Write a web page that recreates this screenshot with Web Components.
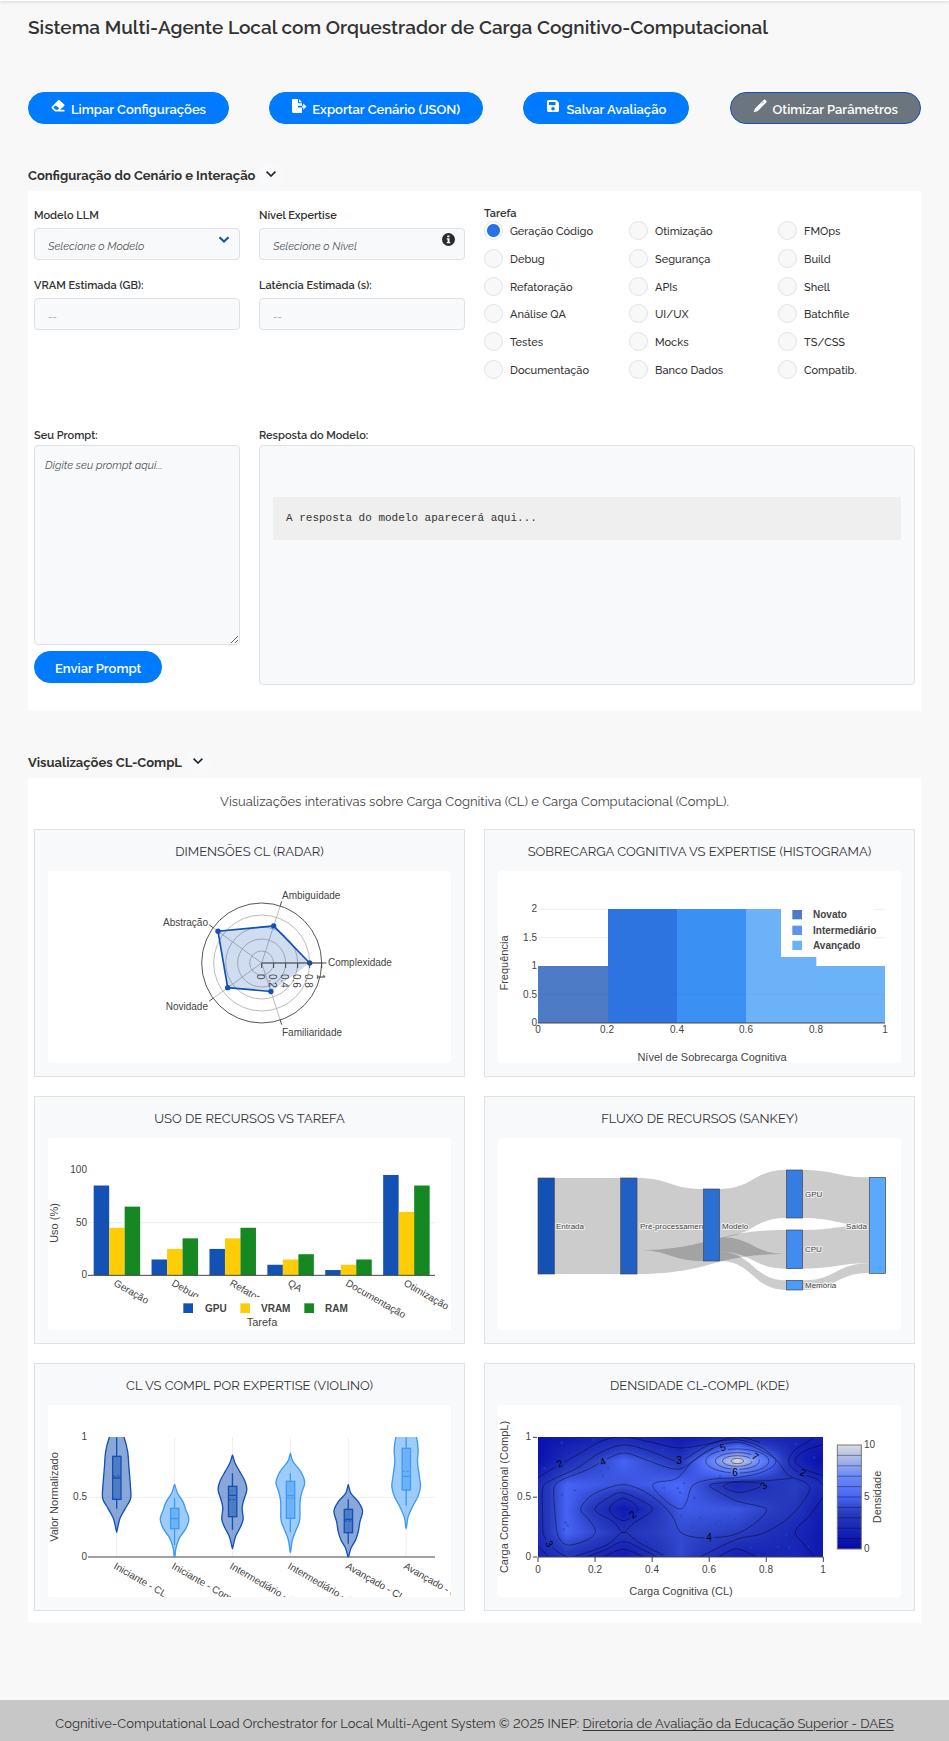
<!DOCTYPE html>
<html lang="pt-BR">
<head>
<meta charset="utf-8">
<meta name="viewport" content="width=device-width, initial-scale=1">
<title>Sistema Multi-Agente Local</title>
<style>
body{margin:0;background:#f8f8f8;color:#333;font-family:Raleway,"Open Sans",sans-serif;font-size:13px;font-variant-numeric:lining-nums}
</style>
</head>
<body>
<orq-app></orq-app>
<script>
const define = (name, html, setup) => {
  const tpl = document.createElement('template');
  tpl.innerHTML = html;
  customElements.define(name, class extends HTMLElement {
    connectedCallback() {
      if (this.shadowRoot) return;
      this.attachShadow({ mode: 'open' }).append(tpl.content.cloneNode(true));
      if (setup) setup(this, this.shadowRoot);
    }
  });
};

/* ---------- buttons ---------- */
const ICONS = {
  eraser: '<path fill-rule="evenodd" d="M8.6 1.2 13.2 5.4c.5.5.5 1.100 0 1.600L9 10.800h4.500V12.500H4.200L.900 9.400c-.5-.5-.5-1.200 0-1.700L7.100 1.200c.4-.4 1.100-.4 1.500 0zM4.600 6.400 2.300 8.500l2.500 2.300h1.900l1.600-1.500z"/>',
  export: '<path fill-rule="evenodd" d="M1.200 0H6v4.200h4v2.600H6v1.600h4V14H1.200C.5 14 0 13.500 0 12.800V1.200C0 .5.5 0 1.200 0zM7 0l3 3.200H7zM11.200 4.500 14.500 7.600 11.200 10.700V8.400H10V6.800h1.200z"/>',
  save: '<path fill-rule="evenodd" d="M2.500 1h7.800L13 3.700v7.800c0 .8-.7 1.500-1.500 1.500h-9C1.700 13 1 12.300 1 11.500v-9C1 1.700 1.700 1 2.500 1zM3 3v3h6.500V3zm4 5a1.800 1.800 0 1 0 0 3.600A1.800 1.800 0 0 0 7 8z"/>',
  pen: '<path d="M10.700.9c.5-.5 1.200-.5 1.700 0l.9.9c.5.5.5 1.200 0 1.700L4.800 12 1 13.300l-.3-.3L2 9.400z"/><path d="M9 4.500l1.800-1.800" stroke="#6c757d" stroke-width=".8"/>'
};
define('pill-button', `
<style>
:host{display:block}
button{display:flex;align-items:center;gap:6px;height:32px;padding:0 22px;border:1px solid #007bff;border-radius:16px;background:#007bff;color:#fff;font:600 13px/18px Raleway,"Open Sans",sans-serif;white-space:nowrap;cursor:pointer}
:host([tone=muted]) button{background:#6c757d;border-color:#1351b4}
:host([plain]) button{padding:0 20px}
svg{width:14px;height:14px;margin-bottom:4px;fill:#fff;overflow:visible}
:host([plain]) svg{display:none}
span{padding-top:3px}
</style>
<button type="button"><svg viewBox="0 0 14 14" aria-hidden="true"></svg><span><slot></slot></span></button>`,
(el, root) => { root.querySelector('svg').innerHTML = ICONS[el.getAttribute('icon')] || ''; });

/* ---------- titled section with a panel ---------- */
define('panel-section', `
<style>
:host{display:block;margin-top:37px}
header{display:flex;align-items:center;gap:3px;height:30px}
h2{margin:0;font-size:13px;line-height:18px;font-weight:700}
button{width:26px;height:26px;padding:0 0 5px;border:0;border-radius:50%;background:#f8f9fb;display:grid;place-items:center;cursor:pointer}
.panel{background:#fff;padding:0 6px}
</style>
<header><h2></h2><button type="button" aria-label="Recolher"><svg width="10" height="6" viewBox="0 0 10 6" fill="none" stroke="#222" stroke-width="1.600"><path d="M.6.6 5 5 9.400.6"/></svg></button></header>
<div class="panel"><slot></slot></div>`,
(el, root) => { root.querySelector('h2').textContent = el.getAttribute('heading'); });

/* ---------- form fields ---------- */
define('form-field', `
<style>
:host{display:block}
label{display:block;font-size:11px;line-height:20px;font-weight:600;margin-bottom:2px}
.box{position:relative}
select,input{box-sizing:border-box;display:block;width:100%;height:32px;border:1px solid #dee2e6;border-radius:4px;background:#f8f9fb;padding:6px 13px 0;color:#555;font:italic 11px/18px Raleway,"Open Sans",sans-serif;appearance:none}
input::placeholder{color:#777;opacity:1}
svg{position:absolute;right:10px;top:8px;pointer-events:none}
</style>
<label for="f"></label><div class="box"></div>`,
(el, root) => {
  root.querySelector('label').textContent = el.getAttribute('label');
  const opt = el.getAttribute('option');
  const mark = {
    chevron: '<svg width="12" height="8" viewBox="0 0 12 8" fill="none" stroke="#1351b4" stroke-width="2"><path d="M1.500 1.200 6 5.500 10.500 1.200"/></svg>',
    info: '<svg style="top:5px" width="13" height="13" viewBox="0 0 13 13"><circle cx="6.500" cy="6.500" r="6.500" fill="#2b2b2b"/><path d="M5.300 2.500h2.200v1.700H5.300zM4.800 5.300h2.700v3.700h.8v1.200H4.800V9h.8V6.500h-.8z" fill="#fff"/></svg>'
  }[el.getAttribute('mark')] || '';
  root.querySelector('.box').innerHTML = (opt ? `<select id="f"><option>${opt}</option></select>` : '<input id="f" type="text" readonly placeholder="--">') + mark;
});

/* ---------- task radios ---------- */
const TASKS = ['Geração Código','Otimização','FMOps','Debug','Segurança','Build','Refatoração','APIs','Shell','Análise QA','UI/UX','Batchfile','Testes','Mocks','TS/CSS','Documentação','Banco Dados','Compatib.'];
define('task-picker', `
<style>
:host{display:block}
fieldset{border:0;margin:0;padding:0;min-width:0}
legend{padding:1px 0 0;font-size:11px;line-height:14px;font-weight:600}
.grid{display:grid;grid-template-columns:145fr 149fr 137fr;grid-auto-rows:19px;align-content:space-between;height:158px}
label{display:flex;align-items:center;gap:7px;font-size:11px;line-height:17px;font-weight:500}
span{padding-top:2px}
input{appearance:none;box-sizing:border-box;width:19px;height:19px;margin:0;border:1px solid #e2e3e6;border-radius:50%;background:#f8f8f8}
input:checked{background:radial-gradient(circle,#2670e8 0 6px,#fff 7px)}
</style>
<fieldset><legend>Tarefa</legend><div class="grid"></div></fieldset>`,
(el, root) => {
  root.querySelector('.grid').innerHTML = TASKS.map((t, i) => `<label><input type="radio" name="task"${i ? '' : ' checked'}><span>${t}</span></label>`).join('');
});

/* ---------- scenario form ---------- */
define('scenario-form', `
<style>
:host{display:grid;grid-template-columns:repeat(4,minmax(0,1fr));column-gap:19px;padding:15px 0 26px}
.fields{display:flex;flex-direction:column;gap:16px}
task-picker,.answer{grid-column:span 2}
.prompt,.answer{margin-top:47px}
.answer{grid-column:span 3}
label,h3{display:block;margin:0;padding-top:1px;font-size:11px;line-height:18px;font-weight:600}
textarea{box-sizing:border-box;display:block;width:100%;height:200px;border:1px solid #dee2e6;border-radius:4px;background:#f8f9fb;padding:11px 10px;resize:both;font:italic 11px/18px Raleway,"Open Sans",sans-serif}
textarea::placeholder{color:#555;opacity:1}
pill-button{display:inline-block;margin-top:6px}
.out{box-sizing:border-box;height:240px;border:1px solid #dee2e6;border-radius:4px;background:#f8f9fb;padding:51px 13px 0}
pre{margin:0;padding:12px 13px 13px;background:#efefef;font:11px/18px "Liberation Mono",monospace;white-space:pre-wrap}
</style>
<div class="fields"><form-field label="Modelo LLM" option="Selecione o Modelo" mark="chevron"></form-field><form-field label="VRAM Estimada (GB):"></form-field></div>
<div class="fields"><form-field label="Nível Expertise" option="Selecione o Nível" mark="info"></form-field><form-field label="Latência Estimada (s):"></form-field></div>
<task-picker></task-picker>
<div class="prompt"><label for="p">Seu Prompt:</label><textarea id="p" placeholder="Digite seu prompt aqui..."></textarea><pill-button plain>Enviar Prompt</pill-button></div>
<div class="answer"><h3>Resposta do Modelo:</h3><div class="out"><pre>A resposta do modelo aparecerá aqui...</pre></div></div>`);

/* ---------- charts ---------- */
/* Shapes are drawn on a fine grid of three units per chart pixel, starting at (54, top). */
const plot = top => ({
  shapes: s => `<g transform="scale(.33333) translate(-54 ${-top})">${s}</g>`,
  text: (x, y, s, { anchor = 'middle', size = 10, bold, rot, raw, fill = '#444', halo } = {}) => {
    const px = Math.round((x - 54) / 3), py = Math.round((y - top) / 3);
    const base = raw ? 0 : size === 10 ? 3 : Math.round(size * .35);
    return `<text transform="translate(${px} ${py})${rot ? ` rotate(${rot})` : ''}" y="${base}" text-anchor="${anchor}" font-size="${size}"${bold ? ' font-weight="700"' : ''} fill="${fill}"${halo ? ' stroke="#fff" stroke-width="2" stroke-opacity=".7" paint-order="stroke"' : ''}>${s}</text>`;
  }
});
const rect = (x1, y1, x2, y2, fill, extra = '') => `<rect x="${x1}" y="${y1}" width="${x2 - x1}" height="${y2 - y1}" fill="${fill}" ${extra}/>`;
const line = (x1, y1, x2, y2, stroke = '#444', w = 3) => `<path d="M${x1} ${y1}L${x2} ${y2}" stroke="${stroke}" stroke-width="${w}" fill="none"/>`;
const smooth = (pts, closed) => {
  const n = pts.length, at = i => closed ? pts[(i + n) % n] : pts[Math.max(0, Math.min(n - 1, i))];
  let d = `M${pts[0]}`;
  for (let i = 0; i < (closed ? n : n - 1); i++) {
    const [a, b, c, e] = [at(i - 1), at(i), at(i + 1), at(i + 2)];
    d += `C${b[0] + (c[0] - a[0]) / 6} ${b[1] + (c[1] - a[1]) / 6} ${c[0] - (e[0] - b[0]) / 6} ${c[1] - (e[1] - b[1]) / 6} ${c[0]} ${c[1]}`;
  }
  return d + (closed ? 'Z' : '');
};

const CHARTS = {
  radar() {
    const p = plot(153), cx = 695, cy = 429, R = 180;
    const pt = (k, r) => { const a = k * 72 * Math.PI / 180; return [cx + R * r * Math.cos(a), cy - R * r * Math.sin(a)]; };
    let grid = '';
    for (const r of [.2, .4, .6, .8]) grid += `<circle cx="${cx}" cy="${cy}" r="${R * r}" fill="none" stroke="#bbb" stroke-width="3"/>`;
    for (let k = 0; k < 5; k++) grid += line(cx, cy, ...pt(k, 1), '#bbb') + line(...pt(k, 1), ...pt(k, 1.08), '#444', 3);
    const v = [.8, .65, .9, .7, .5].map((r, k) => pt(k, r));
    const area = `<path d="M${v.join('L')}Z" fill="#1351b4" fill-opacity=".2"/><path d="M${v.join('L')}" fill="none" stroke="#1351b4" stroke-width="5"/>` + v.map(q => `<circle cx="${q[0]}" cy="${q[1]}" r="8" fill="#1351b4"/>`).join('');
    let s = p.shapes(grid + `<circle cx="${cx}" cy="${cy}" r="${R}" fill="none" stroke="#555" stroke-width="3"/>` + area + line(cx, cy, cx + R, cy, '#444', 3) + [0, .2, .4, .6, .8, 1].map(r => line(cx + R * r, cy, cx + R * r, cy + 15)).join(''));
    [0, .2, .4, .6, .8, 1].forEach(r => { s += p.text(cx + R * r - 5, 462, r, { anchor: 'start', rot: 90 }); });
    return s + p.text(895, 429, 'Complexidade', { anchor: 'start' }) + p.text(756, 228, 'Ambiguidade', { anchor: 'start' }) + p.text(533, 309, 'Abstração', { anchor: 'end' }) + p.text(533, 561, 'Novidade', { anchor: 'end' }) + p.text(757, 639, 'Familiaridade', { anchor: 'start' });
  },
  histogram() {
    const p = plot(153);
    let s = [268, 353].map(y => line(174, y, 1215, y, '#eee')).join('');
    s += rect(174, 438, 384, 609, '#4d7bc6') + rect(384, 267, 591, 609, '#2e74e0') + rect(591, 267, 798, 609, '#3a91f3') + rect(798, 267, 1009, 609, '#6cb2f9') + rect(1008, 438, 1215, 609, '#6cb2f9');
    s += line(174, 523, 1215, 523, '#00000008') + line(174, 609, 1215, 609) + rect(903, 258, 1182, 411, '#fff');
    const keys = [['Novato', '#4d7bc6', 284], ['Intermediário', '#5c94ee', 331], ['Avançado', '#6cb2f9', 376]];
    s += keys.map(k => rect(937, k[2] - 14, 966, k[2] + 14, k[1])).join('');
    let o = p.shapes(s) + keys.map(k => p.text(999, k[2] + 2, k[0], { anchor: 'start', bold: 1 })).join('');
    ['2', '1.5', '1', '0.5', '0'].forEach((t, i) => { o += p.text(171, 267 + i * 85.5, t, { anchor: 'end' }); });
    ['0', '0.2', '0.4', '0.6', '0.8', '1'].forEach((t, i) => { o += p.text(174 + i * 208.2, 630, t); });
    return o + p.text(695, 711, 'Nível de Sobrecarga Cognitiva', { size: 11 }) + p.text(72, 428, 'Frequência', { size: 11, rot: -90 });
  },
  bars() {
    const p = plot(144), names = ['Geração', 'Debug', 'Refatoração', 'QA', 'Documentação', 'Otimização'], col = ['#1351b4', '#ffcd07', '#168821'];
    const data = [[85, 45, 65], [15, 25, 35], [25, 35, 45], [10, 15, 20], [5, 10, 15], [95, 60, 85]];
    let s = line(174, 398, 1215, 398, '#eee');
    data.forEach((g, i) => g.forEach((v, k) => { const x = 191 + i * 173.7 + k * 46.5; s += rect(x, 556 - v * 3.17, x + 46.500, 556, col[k]); }));
    s += line(174, 556, 1215, 556);
    let o = p.shapes(s) + ['100', '50', '0'].map((t, i) => p.text(171, 240 + i * 158, t, { anchor: 'end' })).join('');
    names.forEach((t, i) => { o += p.text(250 + i * 173.5, 586, t, { anchor: 'start', rot: 30, raw: 1 }); });
    const keys = [['GPU', 460, 524], ['VRAM', 631, 694], ['RAM', 823, 886]];
    o += p.shapes(rect(445, 621, 965, 675, '#fff') + keys.map((k, i) => rect(k[1], 640, k[1] + 29, 669, col[i])).join(''));
    return o + keys.map(k => p.text(k[2], 657, k[0], { anchor: 'start', bold: 1 })).join('') + p.text(695, 696, 'Tarefa', { size: 11 }) + p.text(72, 398, 'Uso (%)', { size: 11, rot: -90 });
  },
  sankey() {
    const p = plot(144);
    const flow = (x1, a, b, x2, c, d) => { const m = (x1 + x2) / 2; return `<path d="M${x1} ${a}C${m} ${a} ${m} ${c} ${x2} ${c}V${d}C${m} ${d} ${m} ${b} ${x1} ${b}Z" fill="#000" fill-opacity=".2"/>`; };
    const node = (x, y1, y2, f) => rect(x, y1, x + 49, y2, f, 'stroke="#444" stroke-width="2"');
    const o = { anchor: 'start', size: 8, halo: 1 };
    return p.shapes(flow(223, 264, 552, 421, 264, 552) + flow(470, 264, 480, 670, 297, 513) + flow(470, 480, 552, 918, 420, 492) + flow(719, 297, 441, 918, 240, 384) + flow(719, 441, 485, 918, 492, 536) + flow(719, 485, 513, 918, 571, 600) + flow(968, 240, 384, 1168, 262, 406) + flow(968, 420, 536, 1168, 406, 520) + flow(968, 571, 600, 1168, 520, 549))
      + p.text(229, 409, 'Entrada', o) + p.text(479, 409, 'Pré-processamento', o)
      + p.shapes(node(174, 264, 552, '#1351b4') + node(422, 264, 552, '#205fc3') + node(670, 297, 513, '#2b6fd3') + node(919, 240, 384, '#367de0') + node(919, 420, 536, '#418cee') + node(919, 571, 600, '#4c9afb') + node(1168, 262, 550, '#58a9ff'))
      + p.text(727, 407, 'Modelo', o) + p.text(975, 312, 'GPU', o) + p.text(975, 477, 'CPU', o) + p.text(975, 585, 'Memória', o) + p.text(1161, 407, 'Saída', { ...o, anchor: 'end' });
  },
  violin() {
    const p = plot(150), D = '#1351b4', L = '#3d9af5';
    const V = [
      [D, [[225, 10], [247, 22], [290, 33], [340, 37], [390, 41], [430, 42], [460, 26], [490, 10], [527, 1]], 304, 433, 369, 363, 247, 461],
      [L, [[391, 1], [415, 9], [440, 25], [465, 34], [492, 43], [520, 34], [550, 14], [580, 4], [606, 1]], 460, 521, 491, 490, 430, 570],
      [D, [[303, 1], [325, 8], [350, 22], [380, 38], [405, 43], [435, 34], [460, 29], [493, 32], [520, 22], [545, 9], [577, 1]], 394, 485, 421, 434, 355, 524],
      [L, [[298, 1], [320, 8], [350, 31], [382, 43], [410, 35], [440, 29], [495, 28], [525, 17], [555, 6], [588, 1]], 379, 490, 422, 430, 355, 531],
      [D, [[392, 1], [415, 8], [440, 30], [468, 43], [500, 35], [530, 30], [555, 22], [580, 8], [606, 1]], 463, 533, 493, 498, 433, 566],
      [L, [[225, 20], [247, 31], [285, 36], [320, 34], [360, 39], [395, 43], [425, 35], [455, 19], [485, 6], [516, 1]], 280, 405, 364, 349, 247, 452]
    ];
    let s = line(174, 427, 1215, 427, '#eee');
    V.forEach((v, i) => { const x = 260 + i * 173.700; s += line(x, 247, x, 606, '#eee'); });
    s += line(174, 606, 1215, 606);
    s += '<clipPath id="c"><rect x="174" y="246" width="1041" height="361"/></clipPath><g clip-path="url(#c)">' + V.map(([c, pts, t, b, med, mean, w1, w2], i) => {
      const x = 260 + i * 173.7;
      const shape = smooth([...pts.map(q => [x + q[1], q[0]]), ...pts.slice().reverse().map(q => [x - q[1], q[0]])], true);
      return `<g fill="${c}" fill-opacity=".5" stroke="${c}" stroke-width="4"><path d="${shape}"/><rect x="${x - 12}" y="${t}" width="25" height="${b - t}"/><path d="M${x} ${t}V${w1}M${x} ${b}V${w2}M${x - 12} ${med}h25"/><path d="M${x - 12} ${mean}h25" stroke-dasharray="8 5" stroke-width="3"/></g>`;
    }).join('') + '</g>';
    let o = p.shapes(s) + ['1', '0.5', '0'].map((t, i) => p.text(171, 247 + i * 180, t, { anchor: 'end' })).join('');
    ['Iniciante - CL', 'Iniciante - CompL', 'Intermediário - CL', 'Intermediário - CompL', 'Avançado - CL', 'Avançado - CompL'].forEach((t, i) => { o += p.text(250 + i * 173.5, 640, t, { anchor: 'start', rot: 30, raw: 1 }); });
    return o + p.text(72, 426, 'Valor Normalizado', { size: 11, rot: -90 });
  },
  density() {
    const p = plot(150);
    const stops = [[0, 5, 10, 172], [3.5, 40, 60, 190], [5, 70, 100, 245], [6, 90, 120, 245], [7, 106, 137, 247], [10, 220, 220, 220]];
    const colour = z => {
      let i = 1; while (i < 5 && z > stops[i][0]) i++;
      const a = stops[i - 1], b = stops[i], t = Math.max(0, Math.min(1, (z - a[0]) / (b[0] - a[0])));
      return `rgb(${[1, 2, 3].map(k => Math.round(a[k] + (b[k] - a[k]) * t))})`;
    };
    const xs = [0, .1, .3, .5, .7, .9, 1];
    const Z = [[.6, 1, 2, 1, 2, 1.700, 1.500], [.5, 2.500, 5, 3, 10, 2, .3], [2.300, 5, 4.300, 5.300, 2, 3.600, 2], [2.300, 5, 1, 4.600, 4.500, 3, 1], [2.200, 5, 3, 4, 3.500, 2, 1], [1.700, 3, 1, 4, 1.500, 2, .8]];
    let defs = '', heat = '';
    for (let r = 0; r < 60; r++) {
      const f = (r + .5) / 12, j = Math.min(4, Math.floor(f)), t = f - j;
      let g = '';
      for (let i = 0; i < 6; i++) for (let k = 0; k < 5; k++) {
        const u = k / 5, z = (1 - t) * (Z[j][i] * (1 - u) + Z[j][i + 1] * u) + t * (Z[j + 1][i] * (1 - u) + Z[j + 1][i + 1] * u);
        g += `<stop offset="${(xs[i] + (xs[i + 1] - xs[i]) * u).toFixed(3)}" stop-color="${colour(z)}"/>`;
      }
      defs += `<linearGradient id="h${r}">${g}</linearGradient>`;
      heat += rect(174, 247 + r * 6, 1030, 247 + r * 6 + 6, `url(#h${r})`, 'shape-rendering="crispEdges"');
    }
    const labels = [['2', 241, 328, -25], ['4', 369, 320, -25], ['3', 598, 318, 0], ['5', 730, 280, -15], ['7', 824, 307, 35], ['6', 766, 353, 0], ['2', 968, 354, 20], ['3', 853, 393, -40], ['2', 460, 481, -40], ['3', 208, 566, 55], ['4', 688, 548, 0]];
    defs += '<linearGradient id="bar" x1="0" y1="1" x2="0" y2="0">' + stops.map(q => `<stop offset="${q[0] / 10}" stop-color="${colour(q[0])}"/>`).join('') + '</linearGradient>'
      + `<mask id="k" maskUnits="userSpaceOnUse" x="174" y="246" width="856" height="361"><rect x="174" y="246" width="856" height="361" fill="#fff"/>${labels.map(l => `<circle cx="${l[1]}" cy="${l[2]}" r="14"/>`).join('')}</mask>`;
    const open = [
      [[174, 367], [241, 328], [300, 295], [365, 258], [430, 246], [515, 262], [600, 279], [690, 265], [770, 246], [840, 262]],
      [[262, 606], [235, 592], [207, 566], [190, 535], [188, 480], [188, 400], [215, 375], [290, 340], [360, 293], [430, 270], [500, 285], [560, 308], [600, 319], [650, 290], [700, 264], [770, 254], [840, 275], [890, 315], [925, 360], [980, 385], [985, 415], [930, 485], [850, 535], [770, 553], [660, 606]],
      [[174, 572], [206, 606]],
      [[225, 480], [222, 400], [245, 375], [320, 345], [370, 318], [430, 294], [500, 315], [560, 337], [600, 342], [630, 325], [690, 283], [770, 262], [840, 285], [888, 318], [850, 350], [770, 368], [700, 372], [640, 390], [620, 440], [600, 462], [560, 440], [520, 398], [530, 382], [590, 370], [640, 318], [700, 280]],
      [[225, 480], [235, 545], [265, 570], [325, 553], [346, 527], [325, 492], [302, 463], [330, 425], [380, 400], [430, 389], [480, 403], [530, 435], [575, 480], [600, 530], [640, 546], [688, 548], [760, 540], [825, 505], [860, 465], [830, 452], [770, 438], [720, 412], [690, 390], [760, 380], [860, 377], [935, 370]],
      [[320, 606], [375, 585], [430, 560], [490, 585], [530, 606]], [[280, 606], [380, 570], [430, 532], [480, 565], [550, 600]],
      [[370, 606], [430, 583], [490, 606]], [[715, 606], [770, 582], [830, 606]],
      [[1003, 248], [945, 285], [926, 318], [940, 342], [968, 358], [1010, 372], [1030, 392]],
      [[1030, 268], [970, 290], [945, 318], [975, 343], [1030, 362]],
      [[1030, 425], [990, 480], [946, 530], [975, 570], [1003, 606]]
    ];
    const loops = [
      [[388, 463], [430, 430], [474, 463], [430, 497]],
      [[345, 463], [400, 420], [430, 414], [470, 430], [517, 463], [460, 505], [430, 532], [400, 500]],
      [[731, 392], [765, 382], [853, 386], [830, 400], [780, 412], [745, 404]]
    ];
    const rings = [[19, 8], [45, 16], [66, 25], [95, 36]].map(r => `<ellipse cx="772" cy="318" rx="${r[0]}" ry="${r[1]}"/>`).join('');
    const dots = [[245, 263], [340, 255], [484, 273], [548, 285], [620, 279], [193, 340], [362, 348], [384, 340], [369, 362], [285, 406], [246, 420], [552, 398], [593, 400], [600, 413], [643, 428], [604, 482], [661, 488], [721, 497], [706, 506], [765, 492], [744, 517], [636, 519], [257, 503], [263, 512], [251, 524], [811, 578], [895, 576], [927, 577], [919, 539], [1003, 308], [948, 268], [720, 364], [628, 300], [760, 447], [984, 575], [612, 385]];
    let s = `<defs>${defs}</defs>` + heat + dots.map(d => `<circle cx="${d[0]}" cy="${d[1]}" r="4" fill="#1351b4" fill-opacity=".55"/>`).join('')
      + `<g mask="url(#k)" fill="none" stroke="#000" stroke-opacity=".65" stroke-width="2">${open.map(q => `<path d="${smooth(q)}"/>`).join('')}${loops.map(q => `<path d="${smooth(q, true)}"/>`).join('')}${rings}</g>`
      + line(174, 606, 1030, 606);
    for (let i = 0; i < 6; i++) s += line(174 + i * 171.2, 606, 174 + i * 171.2, 621);
    for (let i = 0; i < 3; i++) s += line(159, 247 + i * 179.5, 171, 247 + i * 179.5);
    s += rect(1072, 270, 1144, 582, 'url(#bar)', 'stroke="#777" stroke-width="3"');
    for (let i = 1; i < 10; i++) s += line(1072, 270 + i * 31.2, 1144, 270 + i * 31.2, '#00000090', 2);
    let o = p.shapes(s);
    labels.forEach(l => { o += p.text(l[1], l[2], l[0], { rot: l[3], fill: '#000' }); });
    ['1', '0.5', '0'].forEach((t, i) => { o += p.text(153, 247 + i * 179.5, t, { anchor: 'end' }); });
    ['0', '0.2', '0.4', '0.6', '0.8', '1'].forEach((t, i) => { o += p.text(174 + i * 171.2, 645, t); });
    ['10', '5', '0'].forEach((t, i) => { o += p.text(1153, 270 + i * 156, t, { anchor: 'start' }); });
    return o + p.text(602, 708, 'Carga Cognitiva (CL)', { size: 11 }) + p.text(72, 426, 'Carga Computacional (CompL)', { size: 11, rot: -90 }) + p.text(1190, 426, 'Densidade', { size: 11, rot: -90 });
  }
};
define('chart-card', `
<style>
:host{display:block;border:1px solid #dee2e6;background:#f8f9fb;padding:13px}
h3{margin:0 0 10px;font-size:13px;line-height:18px;font-weight:400;text-align:center;text-transform:uppercase}
svg{display:block;width:100%;height:auto;background:#fff;border-radius:3px;overflow:hidden;font-family:"Liberation Sans",Arial,sans-serif}
</style>
<h3><slot></slot></h3><svg viewBox="0 0 403 192" role="img"></svg>`,
(el, root) => { root.querySelector('svg').innerHTML = CHARTS[el.getAttribute('kind')](); });

define('chart-board', `
<style>
:host{display:block;padding:12px 0}
p{margin:0 0 15px;font-size:13px;line-height:24px;text-align:center;color:#444}
.grid{display:grid;grid-template-columns:repeat(2,minmax(0,1fr));gap:19px}
</style>
<p>Visualizações interativas sobre Carga Cognitiva (CL) e Carga Computacional (CompL).</p>
<div class="grid">
<chart-card kind="radar">Dimensões CL (Radar)</chart-card>
<chart-card kind="histogram">Sobrecarga Cognitiva vs Expertise (Histograma)</chart-card>
<chart-card kind="bars">Uso de Recursos vs Tarefa</chart-card>
<chart-card kind="sankey">Fluxo de Recursos (Sankey)</chart-card>
<chart-card kind="violin">CL vs CompL por Expertise (Violino)</chart-card>
<chart-card kind="density">Densidade CL-CompL (KDE)</chart-card>
</div>`);

define('page-footer', `
<style>
:host{display:block;background:#c7c7c7;color:#333;padding:15px 20px 8px;text-align:center;font-size:13px;line-height:18px}
a{color:inherit;text-underline-offset:2px}
</style>
Cognitive-Computational Load Orchestrator for Local Multi-Agent System © 2025 INEP: <a href="#">Diretoria de Avaliação da Educação Superior - DAES</a>`);

define('orq-app', `
<style>
:host{display:block}
.bar{height:1px;background:#fff;box-shadow:0 1px 3px #00000040}
main{padding:14px 28px 77px}
h1{margin:0 0 53px;font-size:19px;line-height:24px;font-weight:600}
nav{display:flex;justify-content:space-between}
</style>
<div class="bar"></div>
<main>
<h1>Sistema Multi-Agente Local com Orquestrador de Carga Cognitivo-Computacional</h1>
<nav aria-label="Ações"><pill-button icon="eraser">Limpar Configurações</pill-button><pill-button icon="export">Exportar Cenário (JSON)</pill-button><pill-button icon="save">Salvar Avaliação</pill-button><pill-button icon="pen" tone="muted">Otimizar Parâmetros</pill-button></nav>
<panel-section heading="Configuração do Cenário e Interação"><scenario-form></scenario-form></panel-section>
<panel-section heading="Visualizações CL-CompL"><chart-board></chart-board></panel-section>
</main>
<page-footer></page-footer>`);
</script>
</body>
</html>
